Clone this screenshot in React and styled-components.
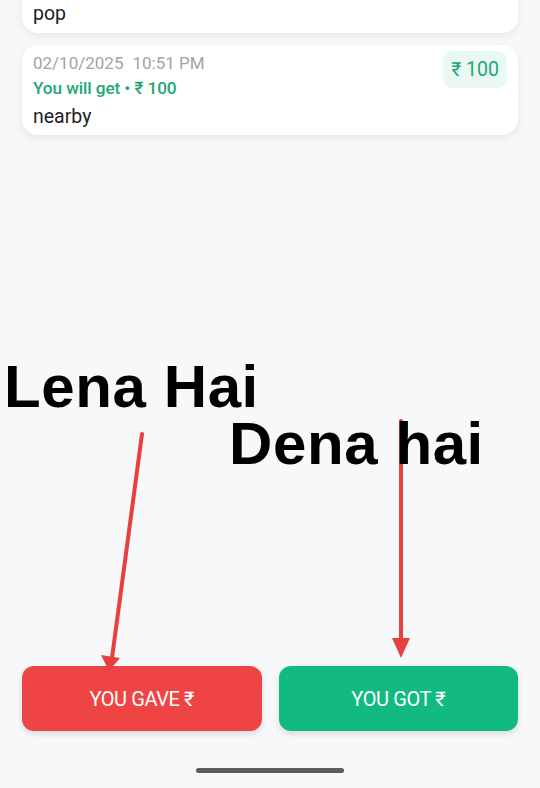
import React from "react";
import styled, { createGlobalStyle } from "styled-components";

const Global = createGlobalStyle`
  html, body { margin: 0; padding: 0; background: #f7f8fa; }
  body { font-family: Roboto, "Noto Sans", Arial, sans-serif; }
`;

const Screen = styled.div`
  position: relative;
  width: 540px;
  height: 788px;
  overflow: hidden;
  display: flex;
  flex-direction: column;
  background: #f7f8fa;
`;

const List = styled.div`
  display: flex;
  flex-direction: column;
  gap: 12px;
  padding: 0 22px;
  margin-top: -38px;
`;

const Card = styled.div`
  display: flex;
  align-items: flex-start;
  justify-content: space-between;
  background: #ffffff;
  border-radius: 16px;
  padding: ${(p) => (p.$clipped ? "40px 11px 7px 11px" : "8px 11px 6px 11px")};
  box-shadow: 0 3px 8px rgba(20, 30, 50, 0.08);
`;

const Info = styled.div`
  display: flex;
  flex-direction: column;
`;

const DateLine = styled.div`
  font-size: 17px;
  line-height: 20px;
  color: #a0a4ab;
`;

const Time = styled.span`
  margin-left: 9px;
`;

const Status = styled.div`
  margin-top: 4px;
  font-size: 17.2px;
  line-height: 22px;
  font-weight: 500;
  letter-spacing: -0.1px;
  color: #22a778;
`;

const Note = styled.div`
  margin-top: ${(p) => (p.$clipped ? "0" : "6px")};
  font-size: 19.5px;
  line-height: 24px;
  color: #202124;
`;

const Badge = styled.div`
  margin-top: -2px;
  background: #e9f8f1;
  color: #22a778;
  border-radius: 9px;
  padding: 0 8px;
  height: 37px;
  display: flex;
  align-items: center;
  font-size: 19.5px;
  font-weight: 400;
`;

const Footer = styled.div`
  margin-top: auto;
  display: grid;
  grid-template-columns: 1fr 1fr;
  gap: 17px;
  padding: 0 22px 0 22px;
`;

const ActionButton = styled.button`
  height: 65px;
  border: none;
  border-radius: 12px;
  background: ${(p) => p.$bg};
  color: #ffffff;
  font-family: Roboto, "Noto Sans", sans-serif;
  font-size: 20px;
  font-weight: 400;
  letter-spacing: -0.4px;
  box-shadow: 0 3px 6px rgba(0, 0, 0, 0.12);
`;

const HomeBar = styled.div`
  display: flex;
  justify-content: center;
  padding: 37px 0 15px;
`;

const Indicator = styled.div`
  width: 148px;
  height: 5px;
  border-radius: 3px;
  background: #5c5c5e;
`;

const Arrows = styled.svg`
  position: absolute;
  left: 0;
  top: 0;
  pointer-events: none;
`;

const Callout = styled.div`
  position: absolute;
  left: ${(p) => p.$x}px;
  top: ${(p) => p.$y}px;
  font-family: "Liberation Sans", Arial, sans-serif;
  font-weight: 700;
  font-size: 60px;
  line-height: 1;
  letter-spacing: 0.6px;
  color: #000;
  white-space: nowrap;
`;

function Entry({ date, time, status, note, amount }) {
  return (
    <Card>
      <Info>
        <DateLine>
          {date}
          <Time>{time}</Time>
        </DateLine>
        <Status>{status}</Status>
        <Note>{note}</Note>
      </Info>
      <Badge>{amount}</Badge>
    </Card>
  );
}

export default function App() {
  return (
    <>
      <Global />
      <Screen>
        <List>
          <Card $clipped>
            <Info>
              <Note $clipped>pop</Note>
            </Info>
          </Card>
          <Entry
            date="02/10/2025"
            time="10:51 PM"
            status="You will get • ₹ 100"
            note="nearby"
            amount="₹ 100"
          />
        </List>
        <Footer>
          <ActionButton $bg="#ef4444">YOU GAVE ₹</ActionButton>
          <ActionButton $bg="#12b981">YOU GOT ₹</ActionButton>
        </Footer>
        <HomeBar>
          <Indicator />
        </HomeBar>
        <Arrows width="540" height="788" viewBox="0 0 540 788">
          <g stroke="#e8403f" strokeWidth="4" strokeLinecap="round" fill="#e8403f">
            <line x1="142" y1="434" x2="112" y2="658" />
            <polygon points="101,655 120,658 109,671" stroke="none" />
            <line x1="401" y1="421" x2="401" y2="642" />
            <polygon points="392,638 410,638 401,658" stroke="none" />
          </g>
        </Arrows>
        <Callout $x={4} $y={357}>Lena Hai</Callout>
        <Callout $x={229} $y={414}>Dena hai</Callout>
      </Screen>
    </>
  );
}
